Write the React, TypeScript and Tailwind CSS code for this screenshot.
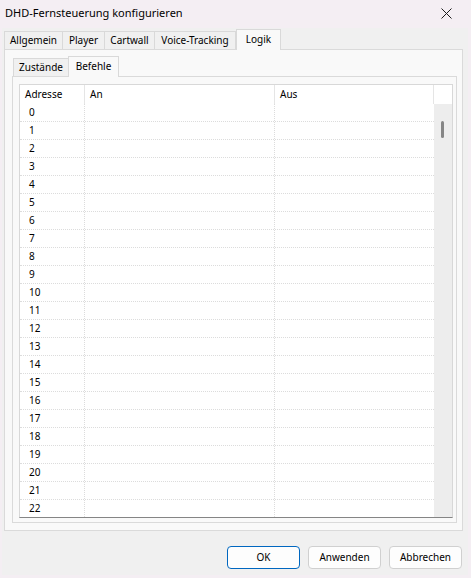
import React from "react";

const rows = Array.from({ length: 23 }, (_, i) => i);

function OuterTab({ label, w, active }: { label: string; w: string; active?: boolean }) {
  if (active) {
    return (
      <div className={`${w} h-[21px] -mb-px relative z-10 flex items-center justify-center border border-b-0 border-[#d9d9d9] bg-[#f9f9f9] pb-[2px]`}>
        {label}
      </div>
    );
  }
  return (
    <div className={`${w} h-[18px] flex items-center justify-center border-t border-r border-[#d9d9d9] bg-[#f0f0f0]`}>
      {label}
    </div>
  );
}

export default function App() {
  return (
    <div className="w-[471px] h-[578px] bg-[#f4eef3] pl-[2px] pr-[3px] pb-[3px] flex flex-col font-['Noto_Sans',sans-serif] text-[10px] text-black overflow-hidden">
      {/* title bar */}
      <div className="h-[28px] flex items-center justify-between pl-[3px] pr-[16px] shrink-0">
        <span className="text-[11px] -mt-[2px]">DHD-Fernsteuerung konfigurieren</span>
        <svg width="11" height="11" viewBox="0 0 11 11" className="-mt-[2px]">
          <path d="M0.5 0.5 L10.5 10.5 M10.5 0.5 L0.5 10.5" stroke="#1c1c1c" strokeWidth="1" />
        </svg>
      </div>

      {/* body */}
      <div className="flex-1 bg-[#f0f0f0] pl-[2px] pr-[5px] flex flex-col">
        {/* outer tabs */}
        <div className="h-[21px] flex items-end shrink-0">
          <div className="w-[59px] h-[18px] flex items-center justify-center border-t border-l border-r border-[#d9d9d9] bg-[#f0f0f0]">
            Allgemein
          </div>
          <OuterTab label="Player" w="w-[42px]" />
          <OuterTab label="Cartwall" w="w-[50px]" />
          <OuterTab label="Voice-Tracking" w="w-[81px]" />
          <OuterTab label="Logik" w="w-[45px]" active />
        </div>

        {/* outer panel */}
        <div className="h-[482px] border border-[#dadada] bg-[#f9f9f9] pt-[6px] pl-[7px] pr-[5px] pb-[7px] flex flex-col">
          {/* inner tabs */}
          <div className="h-[20px] flex items-end ml-[1px] shrink-0">
            <div className="w-[55px] h-[18px] flex items-center justify-center border-t border-l border-[#d9d9d9] bg-[#f0f0f0]">
              Zustände
            </div>
            <div className="w-[51px] h-[21px] -mb-px relative z-10 flex items-center justify-center border border-b-0 border-[#d9d9d9] bg-[#f9f9f9] pb-[2px]">
              Befehle
            </div>
          </div>

          {/* inner panel */}
          <div className="flex-1 border border-[#dadada] bg-[#f9f9f9] pt-[7px] pl-[6px] pr-[3px] pb-[4px]">
            {/* list view */}
            <div className="w-[434px] h-[434px] bg-white border border-[#d8d8d8] border-b-[#858585] flex flex-col overflow-hidden">
              {/* header */}
              <div className="h-[19px] flex shrink-0">
                <div className="w-[65px] border-r border-[#e5e5e5] pl-[5px] flex items-center">Adresse</div>
                <div className="w-[190px] border-r border-[#e5e5e5] pl-[5px] flex items-center">An</div>
                <div className="w-[159px] border-r border-[#e5e5e5] pl-[5px] flex items-center">Aus</div>
                <div className="flex-1" />
              </div>
              {/* body */}
              <div className="flex-1 flex overflow-hidden">
                <div className="w-[414px] flex flex-col">
                  {rows.map((r) => (
                    <div key={r} className="h-[18px] shrink-0 flex border-b border-dotted border-[#dcdcdc]">
                      <div className="w-[65px] border-r border-dotted border-[#dcdcdc] pl-[9px] flex items-center">{r}</div>
                      <div className="w-[190px] border-r border-dotted border-[#dcdcdc]" />
                      <div className="flex-1" />
                    </div>
                  ))}
                </div>
                <div className="flex-1 bg-[#ededed]">
                  <div className="ml-[7px] mt-[17px] w-[3px] h-[17px] rounded-full bg-[#868686]" />
                </div>
              </div>
            </div>
          </div>
        </div>

        {/* footer */}
        <div className="flex justify-end gap-[8px] pt-[15px] pr-[1px]">
          <button className="w-[73px] h-[23px] rounded-[4px] border border-[#0067c0] bg-[#fdfdfd] flex items-center justify-center">
            OK
          </button>
          <button className="w-[73px] h-[23px] rounded-[4px] border border-[#d0d0d0] bg-[#fdfdfd] flex items-center justify-center">
            Anwenden
          </button>
          <button className="w-[73px] h-[23px] rounded-[4px] border border-[#d0d0d0] bg-[#fdfdfd] flex items-center justify-center">
            Abbrechen
          </button>
        </div>
      </div>
    </div>
  );
}
